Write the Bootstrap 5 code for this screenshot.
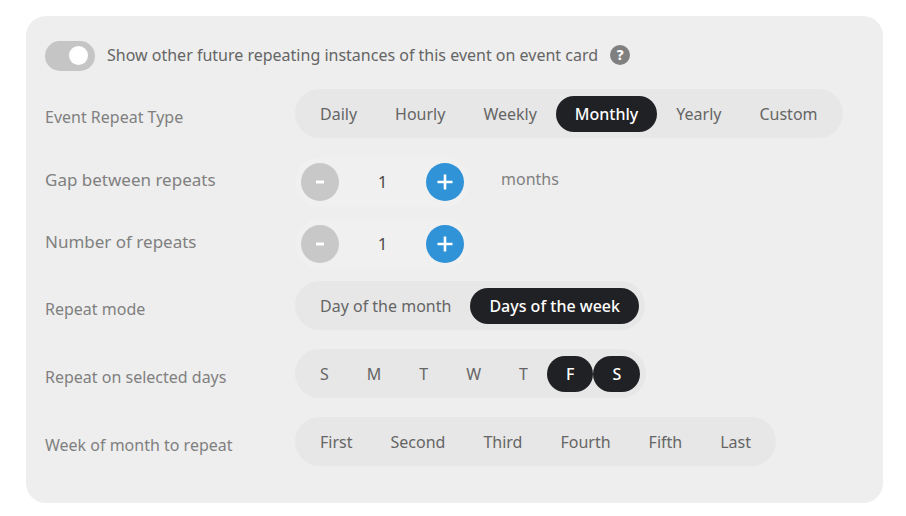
<!DOCTYPE html>
<html lang="en">
<head>
<meta charset="utf-8">
<meta name="viewport" content="width=device-width, initial-scale=1">
<title>Event repeat settings</title>
<link href="https://cdn.jsdelivr.net/npm/bootstrap@5.3.0/dist/css/bootstrap.min.css" rel="stylesheet">
<style>
  body { font-family: "Noto Sans", sans-serif; font-size: 16px; line-height: 24px; color: #656565; background: #fff; }
  .page { padding: 16px 23px 13px 26px; }
  .panel { background: #eee; border-radius: 20px; padding: 25px 19px 37px; }
  .setting { margin-bottom: 19px; }
  .setting:last-child { margin-bottom: 0; }
  .setting-stepper { margin-bottom: 12px; }
  .setting-name { flex: 0 0 250px; color: #808080; padding-top: 16px; margin: 0; }
  .setting-stepper .setting-name { font-size: 17px; padding-top: 11px; }
  .toggle-row { margin-bottom: 18px; gap: 12px; }
  .toggle-row .form-check-input {
    float: none; width: 50px; height: 30px; margin: 0; border: 0; border-radius: 15px; box-shadow: none;
    background-color: #c5c5c5; background-size: 30px 30px;
    background-image: url("data:image/svg+xml,%3csvg xmlns='http://www.w3.org/2000/svg' viewBox='0 0 30 30'%3e%3ccircle cx='13.5' cy='14.5' r='9.5' fill='%23fff'/%3e%3c/svg%3e") !important;
  }
  .toggle-text { padding-bottom: 2px; }
  .help { width: 20px; height: 20px; margin-left: 12px; background: #808080; color: #fff; font-size: 14px; line-height: 20px; font-weight: 800; }
  .choices { background: #e7e7e7; border-radius: 25px; padding: 7px 6px 6px; }
  .choices .btn { border: 0; border-radius: 18px; padding: 6px 19px; line-height: 24px; color: #656565; }
  .choices .btn-check:checked + .btn { background: #202124; color: #fff; font-weight: 500; }
  .stepper { background: #f0f0f0; border-radius: 25px; padding: 6px; width: 175px; height: 50px; }
  .stepper .btn { flex: none; width: 38px; height: 38px; border: 0; }
  .stepper .minus, .stepper .minus:disabled { background: #c8c8c8; opacity: 1; }
  .stepper .plus { background: #3092d7; }
  .stepper input { min-width: 0; border: 0; background: none; font-size: 17px; line-height: 24px; padding: 0; color: #4f4b47; }
  .unit { color: #808080; padding-top: 10px; margin-left: 31px; }
</style>
</head>
<body>
<main class="page">
  <form class="panel">
    <div class="toggle-row form-switch d-flex align-items-center p-0">
      <input class="form-check-input" type="checkbox" role="switch" id="showOthers" checked>
      <div class="toggle-text d-flex align-items-center">
        <label for="showOthers">Show other future repeating instances of this event on event card</label>
        <button type="button" class="help btn rounded-circle border-0 p-0" aria-label="Help">?</button>
      </div>
    </div>

    <div class="setting d-flex align-items-start" role="radiogroup" aria-labelledby="typeName">
      <div class="setting-name" id="typeName">Event Repeat Type</div>
      <div class="choices d-flex">
        <input class="btn-check" type="radio" name="type" id="t1"><label class="btn" for="t1">Daily</label>
        <input class="btn-check" type="radio" name="type" id="t2"><label class="btn" for="t2">Hourly</label>
        <input class="btn-check" type="radio" name="type" id="t3"><label class="btn" for="t3">Weekly</label>
        <input class="btn-check" type="radio" name="type" id="t4" checked><label class="btn" for="t4">Monthly</label>
        <input class="btn-check" type="radio" name="type" id="t5"><label class="btn" for="t5">Yearly</label>
        <input class="btn-check" type="radio" name="type" id="t6"><label class="btn" for="t6">Custom</label>
      </div>
    </div>

    <div class="setting setting-stepper d-flex align-items-start">
      <label class="setting-name" for="gap">Gap between repeats</label>
      <div class="stepper d-flex align-items-center">
        <button type="button" class="minus btn rounded-circle p-0 d-flex align-items-center justify-content-center" aria-label="Decrease gap" disabled>
          <svg width="16" height="16" viewBox="0 0 16 16"><path d="M4 8h8" stroke="#fff" stroke-width="3"/></svg>
        </button>
        <input class="form-control text-center shadow-none" type="text" inputmode="numeric" id="gap" value="1">
        <button type="button" class="plus btn rounded-circle p-0 d-flex align-items-center justify-content-center" aria-label="Increase gap">
          <svg width="16" height="16" viewBox="0 0 16 16"><path d="M.5 8h15M8 .5v15" stroke="#fff" stroke-width="2.6"/></svg>
        </button>
      </div>
      <span class="unit">months</span>
    </div>

    <div class="setting setting-stepper d-flex align-items-start">
      <label class="setting-name" for="count">Number of repeats</label>
      <div class="stepper d-flex align-items-center">
        <button type="button" class="minus btn rounded-circle p-0 d-flex align-items-center justify-content-center" aria-label="Decrease number" disabled>
          <svg width="16" height="16" viewBox="0 0 16 16"><path d="M4 8h8" stroke="#fff" stroke-width="3"/></svg>
        </button>
        <input class="form-control text-center shadow-none" type="text" inputmode="numeric" id="count" value="1">
        <button type="button" class="plus btn rounded-circle p-0 d-flex align-items-center justify-content-center" aria-label="Increase number">
          <svg width="16" height="16" viewBox="0 0 16 16"><path d="M.5 8h15M8 .5v15" stroke="#fff" stroke-width="2.6"/></svg>
        </button>
      </div>
    </div>

    <div class="setting d-flex align-items-start" role="radiogroup" aria-labelledby="modeName">
      <div class="setting-name" id="modeName">Repeat mode</div>
      <div class="choices d-flex">
        <input class="btn-check" type="radio" name="mode" id="m1"><label class="btn" for="m1">Day of the month</label>
        <input class="btn-check" type="radio" name="mode" id="m2" checked><label class="btn" for="m2">Days of the week</label>
      </div>
    </div>

    <div class="setting d-flex align-items-start" role="group" aria-labelledby="daysName">
      <div class="setting-name" id="daysName">Repeat on selected days</div>
      <div class="choices d-flex">
        <input class="btn-check" type="checkbox" id="d0"><label class="btn" for="d0">S</label>
        <input class="btn-check" type="checkbox" id="d1"><label class="btn" for="d1">M</label>
        <input class="btn-check" type="checkbox" id="d2"><label class="btn" for="d2">T</label>
        <input class="btn-check" type="checkbox" id="d3"><label class="btn" for="d3">W</label>
        <input class="btn-check" type="checkbox" id="d4"><label class="btn" for="d4">T</label>
        <input class="btn-check" type="checkbox" id="d5" checked><label class="btn" for="d5">F</label>
        <input class="btn-check" type="checkbox" id="d6" checked><label class="btn" for="d6">S</label>
      </div>
    </div>

    <div class="setting d-flex align-items-start" role="group" aria-labelledby="weekName">
      <div class="setting-name" id="weekName">Week of month to repeat</div>
      <div class="choices d-flex">
        <input class="btn-check" type="checkbox" id="w1"><label class="btn" for="w1">First</label>
        <input class="btn-check" type="checkbox" id="w2"><label class="btn" for="w2">Second</label>
        <input class="btn-check" type="checkbox" id="w3"><label class="btn" for="w3">Third</label>
        <input class="btn-check" type="checkbox" id="w4"><label class="btn" for="w4">Fourth</label>
        <input class="btn-check" type="checkbox" id="w5"><label class="btn" for="w5">Fifth</label>
        <input class="btn-check" type="checkbox" id="w6"><label class="btn" for="w6">Last</label>
      </div>
    </div>
  </form>
</main>
<script src="https://cdn.jsdelivr.net/npm/bootstrap@5.3.0/dist/js/bootstrap.bundle.min.js"></script>
</body>
</html>
